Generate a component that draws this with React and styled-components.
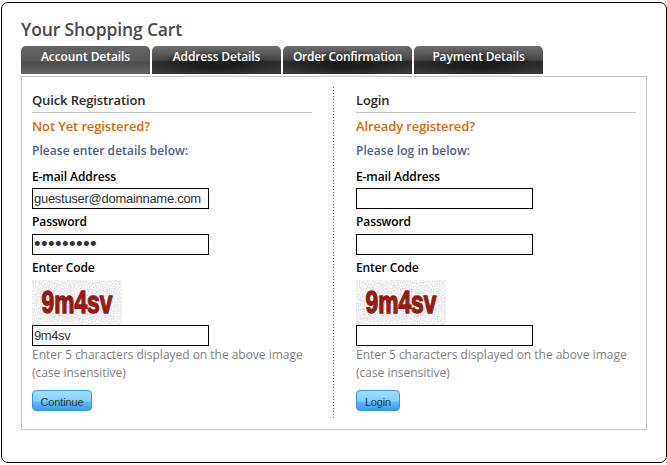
import React from "react";
import styled, { createGlobalStyle } from "styled-components";

const GlobalStyle = createGlobalStyle`
  * { box-sizing: border-box; }
  body { margin: 0; background: #fff; font-family: "Open Sans", "Noto Sans", sans-serif; }
`;

const Frame = styled.main`
  width: 666px;
  height: 461px;
  margin: 2px 0 0 1px;
  padding: 14px 19px 0;
  border: 1px solid #000;
  border-radius: 7px;
  overflow: hidden;
`;

const Title = styled.h1`
  margin: 0;
  height: 29px;
  font-size: 17.5px;
  line-height: 24px;
  font-weight: 600;
  letter-spacing: -0.13px;
  color: #4c4a45;
  white-space: nowrap;
`;

const Tabs = styled.nav`
  display: flex;
  gap: 2px;
  height: 30px;
`;

const Tab = styled.a`
  width: 129px;
  height: 28px;
  border-radius: 5px 5px 0 0;
  font-size: 12px;
  line-height: 22px;
  font-weight: 600;
  letter-spacing: ${(p) => p.$spacing}px;
  text-align: center;
  white-space: nowrap;
  color: #fff;
  background: ${(p) =>
    p.$active
      ? "linear-gradient(#666 0, #565656 15px, #4b4b4b 16px, #646464 100%)"
      : "radial-gradient(ellipse 66px 14px at 50% 62%, rgba(18,18,18,.6) 30%, transparent 100%), linear-gradient(#6e6e6e 0, #484848 14px, #2b2b2b 16px, #393939 100%)"};
`;

const Panel = styled.section`
  display: flex;
  width: 626px;
  height: 354px;
  padding: 10px 10px 0;
  border: 1px solid #c6c6c6;
`;

const Divider = styled.div`
  width: 1px;
  height: 333px;
  margin: 0 22px 0 21px;
  background: repeating-linear-gradient(#666 0 1px, transparent 1px 3px);
`;

const Form = styled.form`
  width: 280px;
  display: flex;
  flex-direction: column;
  align-items: flex-start;
  padding-top: 3px;
`;

const Line = styled.div`
  letter-spacing: ${(p) => p.$spacing || 0}px;
  white-space: nowrap;
`;

const Heading = styled(Line)`
  width: 280px;
  height: 23px;
  font-size: 13px;
  line-height: 20px;
  font-weight: 600;
  color: #2b2b2b;
  border-bottom: 1px solid #c6c6c6;
`;

const Question = styled(Line)`
  margin-top: 3px;
  font-size: 13px;
  line-height: 20px;
  font-weight: 600;
  color: #dd6a08;
`;

const Intro = styled(Line)`
  margin-top: 6px;
  margin-bottom: 4px;
  font-size: 12px;
  line-height: 18px;
  font-weight: 600;
  color: #4f6283;
`;

const Label = styled(Line)`
  margin-top: 4px;
  height: 21px;
  font-size: 12px;
  line-height: 18px;
  font-weight: 600;
  letter-spacing: -0.1px;
  color: #000;

  ${Intro} + & {
    height: 20px;
  }
`;

const Input = styled.input`
  display: block;
  width: 177px;
  height: 21px;
  padding: 0 0 1px 1px;
  border: 1px solid #000;
  border-radius: 0;
  outline: 0;
  background: #fff;
  font: 13px "Liberation Sans", Arial, sans-serif;
  letter-spacing: ${(p) => p.$spacing || 0}px;
  color: #333;

  &[type="password"] {
    font-size: 19px;
    letter-spacing: 0.35px;
  }
`;

const CaptchaArt = styled.svg`
  display: block;
  width: 90px;
  height: 45px;
`;

const Hint = styled.p`
  margin: 0 0 8px;
  height: 36px;
  font-size: 12px;
  line-height: 18px;
  letter-spacing: -0.02px;
  color: #828282;
  white-space: nowrap;
`;

const Submit = styled.button`
  width: ${(p) => p.$width}px;
  height: 21px;
  padding: 2px 0 0;
  border: 1px solid #3596eb;
  border-radius: 4px;
  background: linear-gradient(#a2e0ff 0, #82d0ff 10px, #61bbfa 11px, #3c9bf4 100%);
  font: 11px "Liberation Sans", Arial, sans-serif;
  letter-spacing: -0.15px;
  color: #24402c;
`;

function Captcha({ id }) {
  return (
    <CaptchaArt viewBox="0 0 90 45">
      <filter id={id} x="0" y="0" width="100%" height="100%">
        <feTurbulence type="fractalNoise" baseFrequency="0.85" numOctaves="2" seed="6" />
        <feColorMatrix values="0.65 0 0 0 0.56  0.65 0 0 0 0.56  0.65 0 0 0 0.56  0 0 0 0 1" />
      </filter>
      <rect width="90" height="45" fill="#ededed" filter={`url(#${id})`} />
      <text
        transform="translate(9.5 33.3) scale(0.735 1)"
        fill="#971a12"
        stroke="#971a12"
        strokeWidth="1.4"
        strokeLinejoin="round"
        fontFamily="Liberation Sans, Arial, sans-serif"
        fontWeight="700"
        fontSize="31"
      >
        9m4sv
      </text>
    </CaptchaArt>
  );
}

function Account({ id, heading, question, intro, email, password, code, action, width }) {
  return (
    <Form>
      <Heading $spacing={-0.12}>{heading}</Heading>
      <Question $spacing={-0.12}>{question}</Question>
      <Intro $spacing={0.05}>{intro}</Intro>
      <Label>E-mail Address</Label>
      <Input type="text" defaultValue={email} $spacing={-0.28} />
      <Label>Password</Label>
      <Input type="password" defaultValue={password} />
      <Label>Enter Code</Label>
      <Captcha id={id} />
      <Input type="text" defaultValue={code} $spacing={-0.4} />
      <Hint>
        Enter 5 characters displayed on the above image
        <br />
        (case insensitive)
      </Hint>
      <Submit type="button" $width={width}>{action}</Submit>
    </Form>
  );
}

export default function App() {
  return (
    <Frame>
      <GlobalStyle />
      <Title>Your Shopping Cart</Title>
      <Tabs>
        <Tab $active $spacing={-0.07}>Account Details</Tab>
        <Tab $spacing={-0.16}>Address Details</Tab>
        <Tab $spacing={-0.28}>Order Confirmation</Tab>
        <Tab $spacing={-0.16}>Payment Details</Tab>
      </Tabs>
      <Panel>
        <Account
          id="grain-register"
          heading="Quick Registration"
          question="Not Yet registered?"
          intro="Please enter details below:"
          email="guestuser@domainname.com"
          password="password1"
          code="9m4sv"
          action="Continue"
          width={60}
        />
        <Divider />
        <Account
          id="grain-login"
          heading="Login"
          question="Already registered?"
          intro="Please log in below:"
          action="Login"
          width={44}
        />
      </Panel>
    </Frame>
  );
}
